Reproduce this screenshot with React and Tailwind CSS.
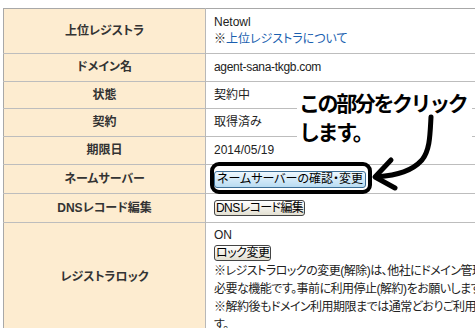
export default function App() {
  const th =
    "w-[202px] bg-[#fdecd0] border-r border-[#b8b8b8] text-center align-middle font-bold text-[12px] text-[#333] p-0";
  const td = "pl-[8px] align-middle text-[12px] text-[#222] p-0";
  return (
    <div className="relative w-[475px] h-[328px] overflow-hidden bg-white font-['Liberation_Sans','Noto_Sans_CJK_JP',sans-serif] [font-feature-settings:'palt']">
      <div className="pt-[8px] pl-[3px]">
        <table className="w-[620px] border-collapse border-t border-l border-[#a8a8a8] leading-[17px]">
          <tbody>
            <tr className="border-b border-[#bdbdbd] h-[45px]">
              <th className={th}>上位レジストラ</th>
              <td className={td}>
                <div>Netowl</div>
                <div>
                  ※<span className="text-[#1a5fb0]">上位レジストラについて</span>
                </div>
              </td>
            </tr>
            <tr className="border-b border-[#bdbdbd] h-[28px]">
              <th className={th}>ドメイン名</th>
              <td className={td + " tracking-[-0.3px]"}>agent-sana-tkgb.com</td>
            </tr>
            <tr className="border-b border-[#bdbdbd] h-[27px]">
              <th className={th}>状態</th>
              <td className={td}>契約中</td>
            </tr>
            <tr className="border-b border-[#bdbdbd] h-[28px]">
              <th className={th}>契約</th>
              <td className={td}>取得済み</td>
            </tr>
            <tr className="border-b border-[#bdbdbd] h-[28px]">
              <th className={th}>期限日</th>
              <td className={td}>2014/05/19</td>
            </tr>
            <tr className="border-b border-[#bdbdbd] h-[29px]">
              <th className={th}>ネームサーバー</th>
              <td className={td}>
                <button className="h-[17px] px-[2px] leading-[15px] text-[12px] text-black border border-[#3c6e96] rounded-[3px] bg-gradient-to-b from-[#eef8ff] to-[#b9dcf2]">
                  ネームサーバーの確認・変更
                </button>
              </td>
            </tr>
            <tr className="border-b border-[#bdbdbd] h-[29px]">
              <th className={th}>DNSレコード編集</th>
              <td className={td}>
                <button className="h-[16px] px-[1px] leading-[14px] text-[12px] tracking-[-0.6px] text-black border border-[#444] rounded-[3px] bg-gradient-to-b from-[#ffffff] to-[#e3e0d2]">
                  DNSレコード編集
                </button>
              </td>
            </tr>
            <tr className="h-[140px]">
              <th className={th + " align-top pt-[46px]"}>レジストラロック</th>
              <td className={td + " align-top pt-[3px] leading-[18px] whitespace-nowrap"}>
                <div>ON</div>
                <div className="h-[18px] flex items-center">
                  <button className="h-[16px] px-[1px] leading-[14px] text-[12px] tracking-[-0.5px] text-black border border-[#444] rounded-[3px] bg-gradient-to-b from-[#ffffff] to-[#e3e0d2]">
                    ロック変更
                  </button>
                </div>
                <div className="tracking-[-0.5px]">
                  <div>※レジストラロックの変更(解除)は、他社にドメイン管理を移管する際に</div>
                  <div>必要な機能です。事前に利用停止(解約)をお願いします。</div>
                  <div>※解約後もドメイン利用期限までは通常どおりご利用いただけま</div>
                  <div>す。</div>
                </div>
              </td>
            </tr>
          </tbody>
        </table>
      </div>

      {/* annotation text */}
      <div className="absolute left-[297px] top-[88px] w-[175px] h-[61px] bg-white pl-[2px] text-[21px] leading-[29px] font-bold tracking-[-2.4px] text-black font-['Noto_Sans_CJK_JP',sans-serif] [font-feature-settings:normal]">
        <div>この部分をクリック</div>
        <div>します。</div>
      </div>

      {/* highlight box */}
      <div className="absolute left-[210px] top-[162px] w-[162px] h-[32px] border-[4px] border-black rounded-[9px]" />

      {/* arrow */}
      <svg className="absolute left-0 top-0" width="475" height="328" viewBox="0 0 475 328">
        <path
          d="M431 117 C430 135 430 150 422 160 C412 171 398 175 377 177"
          fill="none"
          stroke="black"
          strokeWidth="5"
          strokeLinecap="round"
        />
        <path
          d="M391 160 L375 177 L395 188"
          fill="none"
          stroke="black"
          strokeWidth="5"
          strokeLinecap="round"
          strokeLinejoin="round"
        />
      </svg>
    </div>
  );
}
